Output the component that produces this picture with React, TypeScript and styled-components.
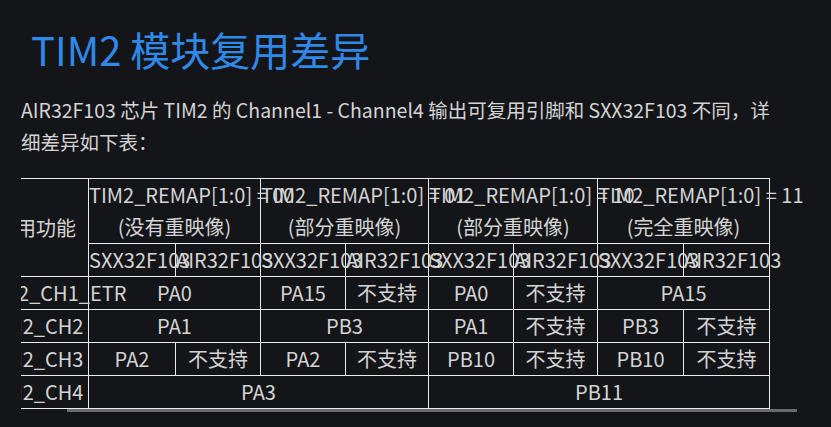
import React, { useLayoutEffect, useRef } from 'react';
import styled, { createGlobalStyle } from 'styled-components';

const GlobalStyle = createGlobalStyle`
  html, body {
    margin: 0;
    background: #141518;
  }
  body {
    font-family: "Noto Sans CJK SC", "Noto Sans", sans-serif;
    color: #d4d4d4;
  }
`;

const Page = styled.div`
  padding: 25px 21px 0 21px;
`;

const Title = styled.h1`
  margin: 0 0 21px;
  padding-left: 10px;
  font-size: 40px;
  font-weight: 400;
  line-height: 48px;
  color: #2f89e8;
`;

const Intro = styled.p`
  margin: 0 0 20px;
  width: 760px;
  font-size: 19.5px;
  line-height: 32px;
`;

const ScrollArea = styled.div`
  width: 747px;
  padding-right: 42px;
  overflow-x: auto;
  scrollbar-width: none;

  &::-webkit-scrollbar {
    display: none;
  }
`;

const Track = styled.div`
  width: 776px;
  height: 3px;
`;

const Thumb = styled.div`
  margin-left: 46px;
  width: 730px;
  height: 3px;
  background: #6b6b6b;
`;

const Table = styled.table`
  border-collapse: collapse;
  table-layout: fixed;
  width: 786px;
  font-size: 20px;
  line-height: 32px;
`;

const Cell = styled.td`
  border: 1px solid #ececec;
  padding: 0;
  text-align: center;
  vertical-align: middle;
  white-space: nowrap;
  overflow: visible;
`;

const HeadCell = styled(Cell).attrs({ as: 'th' })`
  font-weight: 400;
`;

const colWidths = [105, 87, 85, 85, 83, 85, 84, 86, 86];

const remaps = [
  { code: '00', note: '(没有重映像)' },
  { code: '01', note: '(部分重映像)' },
  { code: '10', note: '(部分重映像)' },
  { code: '11', note: '(完全重映像)' },
];

type Row = { name: string; cells: { v: string; span?: number }[] };

const rows: Row[] = [
  {
    name: 'TIM2_CH1_ETR',
    cells: [{ v: 'PA0', span: 2 }, { v: 'PA15' }, { v: '不支持' }, { v: 'PA0' }, { v: '不支持' }, { v: 'PA15', span: 2 }],
  },
  {
    name: 'TIM2_CH2',
    cells: [{ v: 'PA1', span: 2 }, { v: 'PB3', span: 2 }, { v: 'PA1' }, { v: '不支持' }, { v: 'PB3' }, { v: '不支持' }],
  },
  {
    name: 'TIM2_CH3',
    cells: [
      { v: 'PA2' }, { v: '不支持' }, { v: 'PA2' }, { v: '不支持' },
      { v: 'PB10' }, { v: '不支持' }, { v: 'PB10' }, { v: '不支持' },
    ],
  },
  {
    name: 'TIM2_CH4',
    cells: [{ v: 'PA3', span: 4 }, { v: 'PB11', span: 4 }],
  },
];

const App: React.FC = () => {
  const scrollRef = useRef<HTMLDivElement>(null);

  useLayoutEffect(() => {
    if (scrollRef.current) scrollRef.current.scrollLeft = 38;
  }, []);

  return (
    <>
      <GlobalStyle />
      <Page>
        <Title>TIM2 模块复用差异</Title>
        <Intro>
          AIR32F103 芯片 TIM2 的 Channel1 - Channel4 输出可复用引脚和 SXX32F103 不同，详细差异如下表：
        </Intro>
        <ScrollArea ref={scrollRef}>
          <Table>
            <colgroup>
              {colWidths.map((w, i) => (
                <col key={i} style={{ width: w }} />
              ))}
            </colgroup>
            <thead>
              <tr>
                <HeadCell rowSpan={2}>复用功能</HeadCell>
                {remaps.map((r) => (
                  <HeadCell key={r.code} colSpan={2}>
                    TIM2_REMAP[1:0] = {r.code}
                    <br />
                    {r.note}
                  </HeadCell>
                ))}
              </tr>
              <tr>
                {remaps.map((r) => (
                  <React.Fragment key={r.code}>
                    <HeadCell>SXX32F103</HeadCell>
                    <HeadCell>AIR32F103</HeadCell>
                  </React.Fragment>
                ))}
              </tr>
            </thead>
            <tbody>
              {rows.map((row) => (
                <tr key={row.name}>
                  <Cell>{row.name}</Cell>
                  {row.cells.map((c, i) => (
                    <Cell key={i} colSpan={c.span}>
                      {c.v}
                    </Cell>
                  ))}
                </tr>
              ))}
            </tbody>
          </Table>
        </ScrollArea>
        <Track>
          <Thumb />
        </Track>
      </Page>
    </>
  );
};

export default App;
